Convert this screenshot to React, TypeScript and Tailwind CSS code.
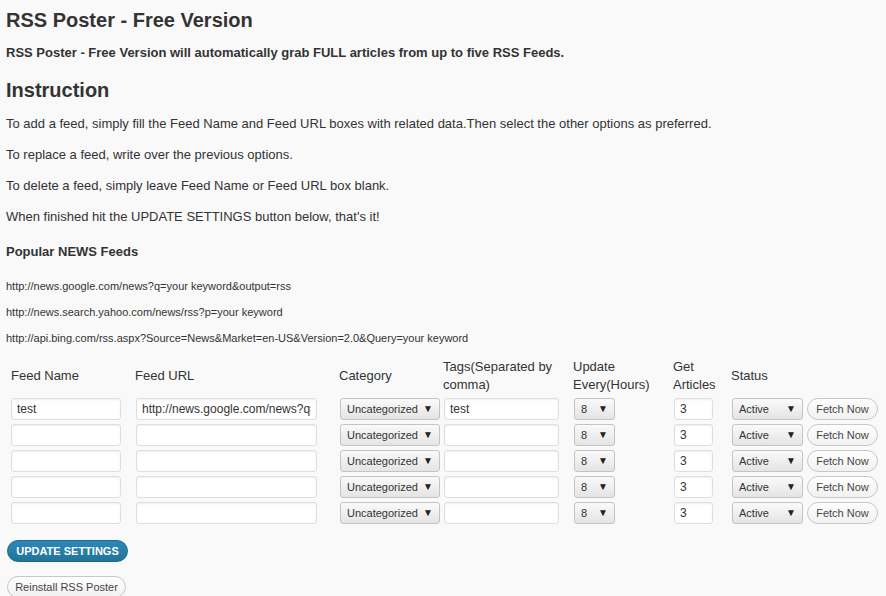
import React from "react";

const feedRows = [
  { name: "test", url: "http://news.google.com/news?q=your keyword&output=rss", tags: "test" },
  { name: "", url: "", tags: "" },
  { name: "", url: "", tags: "" },
  { name: "", url: "", tags: "" },
  { name: "", url: "", tags: "" },
];

const popularFeeds = [
  "http://news.google.com/news?q=your keyword&output=rss",
  "http://news.search.yahoo.com/news/rss?p=your keyword",
  "http://api.bing.com/rss.aspx?Source=News&Market=en-US&Version=2.0&Query=your keyword",
];

const TextBox = ({ value, className }: { value: string; className: string }) => (
  <input
    type="text"
    defaultValue={value}
    className={`h-[22px] rounded-[3px] border border-[#dfdfdf] bg-white px-[5px] text-[12px] text-[#333] shadow-[inset_0_1px_2px_rgba(0,0,0,0.07)] outline-none ${className}`}
  />
);

const Dropdown = ({ options, className }: { options: string[]; className: string }) => (
  <div className={`relative h-[22px] ${className}`}>
    <select className="h-full w-full appearance-none rounded-[3px] border border-[#c4c4c4] bg-gradient-to-b from-[#fafafa] to-[#e4e4e4] pl-[6px] text-[11px] text-[#333] outline-none">
      {options.map((o) => (
        <option key={o}>{o}</option>
      ))}
    </select>
    <span className="pointer-events-none absolute right-[7px] top-[5px] text-[10px] leading-[12px] text-[#222]">▼</span>
  </div>
);

const PillButton = ({ text, className }: { text: string; className: string }) => (
  <button className={`h-[22px] rounded-full border border-[#c8c8c8] bg-gradient-to-b from-[#fefefe] to-[#f1f1f1] text-[11px] text-[#464646] ${className}`}>
    {text}
  </button>
);

export default function App() {
  return (
    <div className="min-h-[596px] w-full bg-[#f9f9f9] px-[6px] text-[#333]" style={{ fontFamily: '"Liberation Sans", Arial, sans-serif' }}>
      <h2 className="pt-[7px] text-[20px] font-bold leading-[26px]">RSS Poster - Free Version</h2>
      <p className="mt-[11px] text-[13px] font-bold leading-[18px]">
        RSS Poster - Free Version will automatically grab FULL articles from up to five RSS Feeds.
      </p>
      <h2 className="mt-[15px] text-[20px] font-bold leading-[26px]">Instruction</h2>
      <div className="mt-[12px] flex flex-col gap-[13px] text-[13px] leading-[18px]">
        <p>To add a feed, simply fill the Feed Name and Feed URL boxes with related data.Then select the other options as preferred.</p>
        <p>To replace a feed, write over the previous options.</p>
        <p>To delete a feed, simply leave Feed Name or Feed URL box blank.</p>
        <p>When finished hit the UPDATE SETTINGS button below, that's it!</p>
      </div>
      <h4 className="mt-[17px] text-[13px] font-bold leading-[18px]">Popular NEWS Feeds</h4>
      <div className="mt-[18px] flex flex-col gap-[12px] text-[11px] leading-[14px]">
        {popularFeeds.map((f) => (
          <p key={f}>{f}</p>
        ))}
      </div>

      <div className="mt-[12px] grid grid-cols-[124px_204px_104px_130px_100px_58px_76px_auto] gap-y-[4px] text-[13px] leading-[18px]">
        <div className="flex h-[37px] items-center pl-[5px]">Feed Name</div>
        <div className="flex h-[37px] items-center pl-[5px]">Feed URL</div>
        <div className="flex h-[37px] items-center pl-[5px]">Category</div>
        <div className="flex h-[37px] items-center pl-[5px]">Tags(Separated by<br />comma)</div>
        <div className="flex h-[37px] items-center pl-[5px]">Update<br />Every(Hours)</div>
        <div className="flex h-[37px] items-center pl-[5px]">Get<br />Articles</div>
        <div className="flex h-[37px] items-center pl-[5px]">Status</div>
        <div />
        {feedRows.map((row, i) => (
          <React.Fragment key={i}>
            <div className="pl-[5px]"><TextBox value={row.name} className="w-[110px]" /></div>
            <div className="pl-[6px]"><TextBox value={row.url} className="w-[181px]" /></div>
            <div className="pl-[6px]"><Dropdown options={["Uncategorized"]} className="w-[100px]" /></div>
            <div className="pl-[6px]"><TextBox value={row.tags} className="w-[115px]" /></div>
            <div className="pl-[6px]"><Dropdown options={["8", "1", "2", "4", "12", "24"]} className="w-[41px]" /></div>
            <div className="pl-[6px]"><TextBox value="3" className="w-[39px]" /></div>
            <div className="pl-[6px]"><Dropdown options={["Active", "Paused"]} className="w-[71px]" /></div>
            <div className="pl-[5px]"><PillButton text="Fetch Now" className="w-[71px]" /></div>
          </React.Fragment>
        ))}
      </div>

      <div className="mt-[16px] flex flex-col items-start gap-[14px] pb-[2px] pl-[1px]">
        <button className="h-[22px] w-[121px] rounded-full border border-[#1e6a8d] bg-gradient-to-b from-[#2e87b7] to-[#21759b] text-[11px] font-bold text-white">
          UPDATE SETTINGS
        </button>
        <PillButton text="Reinstall RSS Poster" className="w-[119px]" />
      </div>
    </div>
  );
}
